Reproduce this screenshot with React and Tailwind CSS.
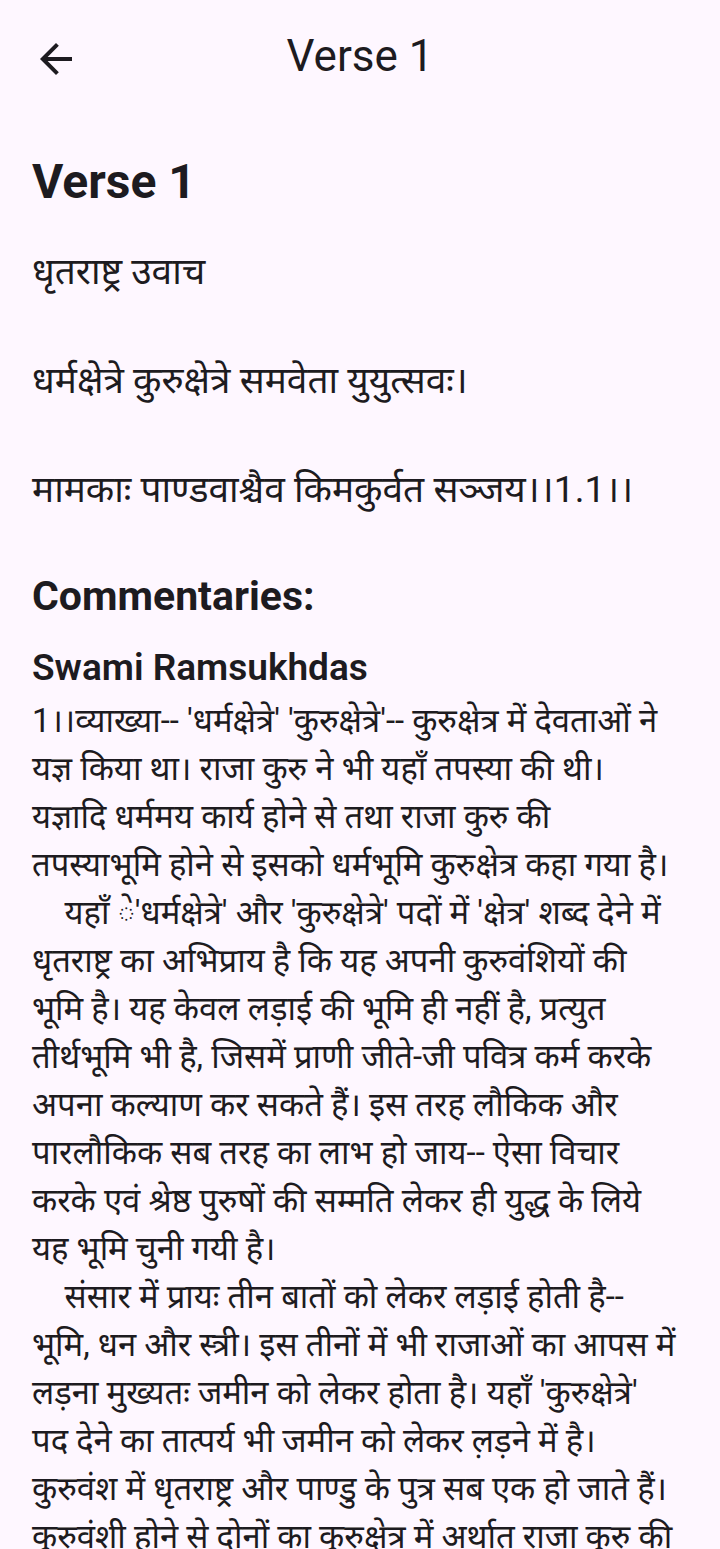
const verseLines = [
  'धृतराष्ट्र उवाच',
  'धर्मक्षेत्रे कुरुक्षेत्रे समवेता युयुत्सवः।',
  'मामकाः पाण्डवाश्चैव किमकुर्वत सञ्जय।।1.1।।',
];

// lines broken as in the app so the wrap stays the same
const commentaryLines = [
  "1।।व्याख्या-- 'धर्मक्षेत्रे' 'कुरुक्षेत्रे'-- कुरुक्षेत्र में देवताओं ने",
  'यज्ञ किया था। राजा कुरु ने भी यहाँ तपस्या की थी।',
  'यज्ञादि धर्ममय कार्य होने से तथा राजा कुरु की',
  'तपस्याभूमि होने से इसको धर्मभूमि कुरुक्षेत्र कहा गया है।',
  "    यहाँ \u0947'धर्मक्षेत्रे' और 'कुरुक्षेत्रे' पदों में 'क्षेत्र' शब्द देने में",
  'धृतराष्ट्र का अभिप्राय है कि यह अपनी कुरुवंशियों की',
  'भूमि है। यह केवल लड़ाई की भूमि ही नहीं है, प्रत्युत',
  'तीर्थभूमि भी है, जिसमें प्राणी जीते-जी पवित्र कर्म करके',
  'अपना कल्याण कर सकते हैं। इस तरह लौकिक और',
  'पारलौकिक सब तरह का लाभ हो जाय-- ऐसा विचार',
  'करके एवं श्रेष्ठ पुरुषों की सम्मति लेकर ही युद्ध के लिये',
  'यह भूमि चुनी गयी है।',
  '    संसार में प्रायः तीन बातों को लेकर लड़ाई होती है--',
  'भूमि, धन और स्त्री। इस तीनों में भी राजाओं का आपस में',
  "लड़ना मुख्यतः जमीन को लेकर होता है। यहाँ 'कुरुक्षेत्रे'",
  'पद देने का तात्पर्य भी जमीन को लेकर ल़ड़ने में है।',
  'कुरुवंश में धृतराष्ट्र और पाण्डु के पुत्र सब एक हो जाते हैं।',
  'कुरुवंशी होने से दोनों का कुरुक्षेत्र में अर्थात् राजा कुरु की',
];

export default function App() {
  return (
    <div className="min-h-screen bg-[#fef7ff] text-[#1d1b20] font-['Roboto','Noto_Sans_Devanagari','Noto_Sans',sans-serif] overflow-hidden">
      {/* APP BAR */}
      <div className="relative h-[112px] flex items-center justify-center">
        <button className="absolute left-[32px] top-[35px] w-12 h-12 flex items-center justify-center" aria-label="Back">
          <svg width="48" height="48" viewBox="0 0 24 24" fill="currentColor">
            <path d="M20 11H7.83l5.59-5.59L12 4l-8 8 8 8 1.41-1.41L7.83 13H20v-2z" />
          </svg>
        </button>
        <div className="text-[44px] leading-none">Verse 1</div>
      </div>

      <div className="px-8 pt-[38px]">
        <h1 className="text-[48px] font-bold leading-[64px]">Verse 1</h1>

        <div className="mt-[31px] text-[37px]">
          {verseLines.map((line, i) => (
            <div key={i} className={`h-[54px] leading-[54px] whitespace-nowrap ${i > 0 ? 'mt-[55px]' : ''}`}>
              {line}
            </div>
          ))}
        </div>

        <h2 className="mt-[51px] text-[41px] font-bold leading-[56px]">Commentaries:</h2>
        <h3 className="mt-[19px] text-[37px] font-semibold leading-[50px]">Swami Ramsukhdas</h3>

        <div className="mt-[4px] text-[32.8px] whitespace-pre">
          {commentaryLines.map((line, i) => (
            <div key={i} className="h-[48px] leading-[48px]">{line}</div>
          ))}
        </div>
      </div>
    </div>
  );
}
